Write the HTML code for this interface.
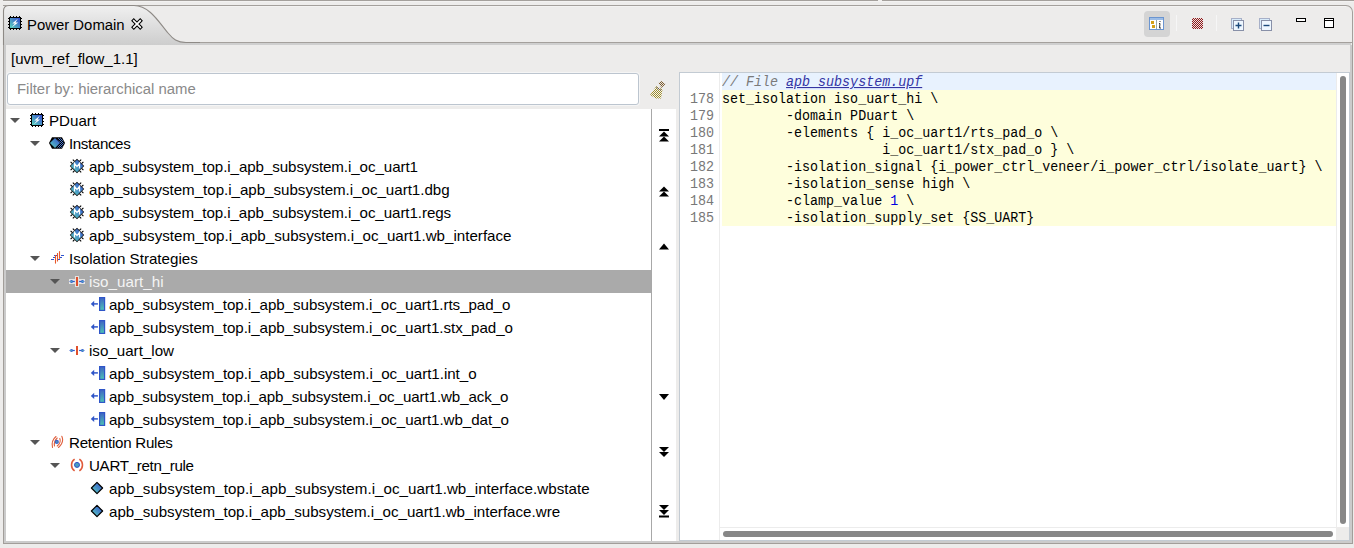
<!DOCTYPE html>
<html><head><meta charset="utf-8">
<style>
*{margin:0;padding:0;box-sizing:border-box}
html,body{width:1354px;height:548px;overflow:hidden;background:#edeceb;font-family:"Liberation Sans",sans-serif;color:#000}
.abs{position:absolute}
#topline{left:3px;top:0;width:1351px;height:1px;background:#a4a09c}
#tabbar{left:3px;top:5px;width:1350px;height:38px;border:1px solid #a4a09c;border-left:none;border-bottom:none;border-top-right-radius:7px}
#tabbar2{left:3px;top:42px;width:1350px;height:1px;background:#a4a09c}
#band{left:3px;top:43px;width:1348px;height:2px;background:#cfcfcf}
#frame{left:3px;top:43px;width:1350px;height:501px;border-left:1px solid #a29e9a;border-bottom:1px solid #a29e9a;border-right:1px solid #a29e9a}
#inner{left:4px;top:45px;width:1348px;height:498px;border:2px solid #cbcbcb;border-top:none;background:#edeceb}
.txt{white-space:pre;font-size:15px;line-height:23px}
#proj{left:11px;top:47px;font-size:15px;line-height:23px;white-space:pre}
#filter{left:7px;top:73px;width:632px;height:32px;background:#fff;border:1px solid #bcc5cf;border-radius:3px;box-shadow:0 0 0 1px #f5f5f5}
#filtertxt{left:17px;top:78px;font-size:14.9px;line-height:23px;color:#8a8a8a;white-space:pre}
#tree{left:6px;top:109px;width:645px;height:432px;background:#fff}
#sep1{left:651px;top:109px;width:1px;height:432px;background:#a8a8a8}
#nav{left:652px;top:109px;width:24px;height:432px;background:#fff}
#sel{left:6px;top:270px;width:645px;height:23px;background:#aaaaaa}
.row{position:absolute;height:23px;line-height:23px;font-size:15.15px;white-space:pre}
.tri{position:absolute;width:0;height:0;border-left:5px solid transparent;border-right:5px solid transparent;border-top:5px solid #555}
.ic{position:absolute}
#editor{left:679px;top:72px;width:671px;height:469px;border:1px solid #c3cbd3;background:#fff}
#ruler{left:680px;top:73px;width:39px;height:454px;background:#fff}
#rsep{left:719px;top:73px;width:1px;height:467px;background:#ececec}
#cmtband{left:722px;top:73px;width:614px;height:17px;background:#e8f2fe}
#yband{left:722px;top:90px;width:614px;height:136px;background:#fefedc}
.code{position:absolute;left:722px;font-family:"Liberation Mono",monospace;font-size:13.35px;line-height:17px;white-space:pre;color:#000;transform:scaleY(1.1);transform-origin:0 3px}
.ln{position:absolute;left:680px;width:34px;text-align:right;font-family:"Liberation Mono",monospace;font-size:13.35px;line-height:17px;white-space:pre;color:#787878;transform:scaleY(1.1);transform-origin:0 3px}
#vthumb{left:1340px;top:76px;width:6px;height:448px;background:#878787;border-radius:3px}
#hthumb{left:723px;top:531px;width:610px;height:6px;background:#878787;border-radius:3px}
#corner{left:1336px;top:527px;width:13px;height:13px;background:#edeceb}
#hsep{left:720px;top:527px;width:616px;height:1px;background:#ececec}
#vsep{left:1336px;top:73px;width:1px;height:454px;background:#ececec}
</style></head><body>
<svg width="0" height="0" style="position:absolute">
<defs>
  <linearGradient id="gblue" x1="0" y1="1" x2="1" y2="0">
    <stop offset="0.1" stop-color="#58c8c0"/><stop offset="0.9" stop-color="#3656cc"/></linearGradient>
  <linearGradient id="gbar" x1="0" y1="0" x2="0" y2="1">
    <stop offset="0" stop-color="#3f62c4"/><stop offset="1" stop-color="#4ec4b4"/></linearGradient>
  <pattern id="chk" width="2" height="2" patternUnits="userSpaceOnUse">
    <rect width="2" height="2" fill="#000"/><rect width="1" height="1" fill="#4a78d0"/><rect x="1" y="1" width="1" height="1" fill="#4a78d0"/></pattern>
  <symbol id="i-chip" viewBox="0 0 14 14">
    <rect x="1" y="1" width="12" height="12" fill="#000"/>
    <g fill="#000">
      <rect x="2" y="0" width="1" height="1"/><rect x="5" y="0" width="1" height="1"/><rect x="8" y="0" width="1" height="1"/><rect x="11" y="0" width="1" height="1"/>
      <rect x="2" y="13" width="1" height="1"/><rect x="5" y="13" width="1" height="1"/><rect x="8" y="13" width="1" height="1"/><rect x="11" y="13" width="1" height="1"/>
      <rect x="0" y="2" width="1" height="1"/><rect x="0" y="5" width="1" height="1"/><rect x="0" y="8" width="1" height="1"/><rect x="0" y="11" width="1" height="1"/>
      <rect x="13" y="2" width="1" height="1"/><rect x="13" y="5" width="1" height="1"/><rect x="13" y="8" width="1" height="1"/><rect x="13" y="11" width="1" height="1"/>
    </g>
    <rect x="2" y="2" width="10" height="10" fill="url(#gblue)"/>
    <path d="M10,2.6 L4.3,7.4 L7,7.4 L3.6,11.4 L10.2,6.4 L7.4,6.4 Z" fill="#fff"/>
  </symbol>
  <symbol id="i-inst" viewBox="0 0 16 12">
    <path d="M0,6 L3,0.3 L13,0.3 L16,6 L13,11.7 L3,11.7 Z" fill="#000"/>
    <path d="M8,1.3 L12.8,1.3 L15,6 L12.8,10.7 L8,10.7 L11.5,6 Z" fill="url(#chk)"/>
    <path d="M0.9,6 L6,0.9 L11.1,6 L6,11.1 Z" fill="url(#gblue)"/>
  </symbol>
  <symbol id="i-mod" viewBox="0 0 16 16">
    <g stroke="#000" stroke-width="1.1">
      <path d="M3.4,5.6 L1.6,3.8 M5.6,3.4 L3.8,1.6"/>
      <path d="M10.4,3.4 L12.2,1.6 M12.6,5.6 L14.4,3.8"/>
      <path d="M3.4,10.4 L1.6,12.2 M5.6,12.6 L3.8,14.4"/>
      <path d="M10.4,12.6 L12.2,14.4 M12.6,10.4 L14.4,12.2"/>
    </g>
    <path d="M8,0.8 L15.2,8 L8,15.2 L0.8,8 Z" fill="#000"/>
    <path d="M8,1.7 L14.3,8 L8,14.3 L1.7,8 Z" fill="url(#gblue)"/>
    <path d="M5.5,10.6 L5.5,5.4 L8,8.6 L10.5,5.4 L10.5,10.6" fill="none" stroke="#fff" stroke-width="1.25" stroke-linejoin="miter"/>
  </symbol>
  <symbol id="i-isos" viewBox="0 0 15 14">
    <g stroke="#2f55d0" stroke-width="1">
      <path d="M4,4.5 L7,4.5 M11,4.5 L14,4.5"/><path d="M3,6.5 L5,6.5 M9,6.5 L12,6.5"/><path d="M1,8.5 L4,8.5 M7,8.5 L10,8.5"/>
    </g>
    <g stroke="#e8582a" stroke-width="1.1">
      <path d="M5.5,4 L5.5,12.6"/><path d="M7.5,2 L7.5,10.5"/><path d="M9.5,0.2 L9.5,7.8"/>
    </g>
  </symbol>
  <symbol id="i-iso" viewBox="0 0 16 12">
    <path d="M2,6.5 L5.8,6.5" stroke="#2f55d0" stroke-width="1.2"/>
    <path d="M1,6.5 L2.5,5 L4,6.5 L2.5,8 Z" fill="#4aa8c0" stroke="#2f55d0" stroke-width="0.9"/>
    <path d="M10.1,6.5 L14,6.5" stroke="#2f55d0" stroke-width="1.2"/>
    <path d="M15,6.5 L13.5,5 L12,6.5 L13.5,8 Z" fill="#4aa8c0" stroke="#2f55d0" stroke-width="0.9"/>
    <rect x="7" y="2" width="2" height="9" fill="#e0502c"/>
  </symbol>
  <symbol id="i-port" viewBox="0 0 16 16">
    <path d="M2.5,7.9 L7.9,7.9" stroke="#2f55c8" stroke-width="1.5"/>
    <path d="M0.8,7.9 L4.2,4.8 L4.2,11 Z" fill="#2f55c8"/>
    <rect x="9.6" y="1.6" width="5" height="12.8" fill="url(#gbar)" stroke="#2f55c8" stroke-width="1.2"/>
  </symbol>
  <symbol id="i-rets" viewBox="0 0 14 14">
    <g fill="none" stroke="#e0603e" stroke-width="1.1" stroke-linecap="round">
      <path d="M6,1.5 Q1,5.5 2.5,12.5"/><path d="M7.2,3 Q3.5,6.5 4.5,11"/>
      <path d="M11.8,1.2 Q14.5,7 8.5,12.5"/><path d="M9.8,3.5 Q11.5,7.5 7.2,11"/>
    </g>
    <circle cx="6.8" cy="6.9" r="2.1" fill="#3f5fc8"/>
    <circle cx="6.8" cy="6.9" r="0.9" fill="#4aa0b8"/>
  </symbol>
  <symbol id="i-ret" viewBox="0 0 16 16">
    <g fill="none" stroke="#e05a3a" stroke-width="1.55">
      <path d="M5.6,2.2 A7,7 0 0,0 5.6,13.8"/><path d="M10.4,2.2 A7,7 0 0,1 10.4,13.8"/>
    </g>
    <circle cx="8" cy="7.9" r="2.5" fill="#4a9ec0" stroke="#3050c8" stroke-width="1"/>
  </symbol>
  <symbol id="i-dia" viewBox="0 0 14 14">
    <path d="M7,1.4 L12.6,7 L7,12.6 L1.4,7 Z" fill="url(#gblue)" stroke="#000" stroke-width="1.2" stroke-linejoin="round"/>
  </symbol>
</defs>
</svg>

<div class="abs" id="topline"></div><div class="abs" style="left:878px;top:0;width:4px;height:1px;background:#f0efee"></div><div class="abs" style="left:3px;top:1px;width:1351px;height:1px;background:#f3f2f1"></div><div class="abs" style="left:180px;top:6px;width:1166px;height:1px;background:#f3f2f1"></div>
<div class="abs" id="tabbar"></div>
<div class="abs" id="tabbar2"></div>
<div class="abs" id="frame"></div>
<div class="abs" id="inner"></div>
<div class="abs" id="band"></div>

<!-- active tab -->
<svg class="abs" style="left:0;top:0" width="200" height="46">
  <defs><linearGradient id="tg" x1="0" y1="0" x2="0" y2="1">
    <stop offset="0" stop-color="#f0f0f0"/><stop offset="1" stop-color="#cdcdcd"/></linearGradient></defs>
  <path d="M3.5,45 L3.5,11 Q3.5,5.5 9,5.5 L134,5.5 C150,5.5 160,24 168,33 C173,39 177,42.5 186,42.5 L200,42.5 L200,45 Z" fill="url(#tg)"/>
  <path d="M3.5,45 L3.5,11 Q3.5,5.5 9,5.5 L134,5.5 C150,5.5 160,24 168,33 C173,39 177,42.5 186,42.5 L200,42.5" fill="none" stroke="#8e8a86" stroke-width="1.1"/>
</svg>
<!-- tab icon -->
<svg class="abs" style="left:8px;top:16px" width="14" height="14"><use href="#i-chip"/></svg>
<div class="abs txt" style="left:27px;top:14px;font-size:14.9px">Power Domain</div>
<svg class="abs" style="left:131px;top:18px" width="12" height="12" viewBox="0 0 12 12">
  <path d="M2.8,2.8 L9.2,9.2 M9.2,2.8 L2.8,9.2" stroke="#000" stroke-width="3.8" stroke-linecap="square"/>
  <path d="M2.8,2.8 L9.2,9.2 M9.2,2.8 L2.8,9.2" stroke="#fff" stroke-width="1.7" stroke-linecap="square"/>
</svg>

<!-- toolbar -->
<div class="abs" style="left:1144px;top:11px;width:26px;height:26px;background:#d4d4d4;border-radius:4px"></div>
<svg class="abs" style="left:1149px;top:17px" width="15" height="13" viewBox="0 0 15 13">
  <rect x="0.5" y="0.5" width="14" height="12" fill="#fff" stroke="#6b95d0"/>
  <rect x="1" y="1" width="13" height="2" fill="#9dbde6"/>
  <rect x="7" y="3" width="1" height="9" fill="#9aa"/>
  <rect x="2" y="4" width="3" height="3" fill="#d4a017"/>
  <rect x="3" y="8" width="3" height="3" fill="#d4a017"/>
  <path d="M11,4 L11,5 M10,6.5 L11,6.5 L10.5,11 L12,11" stroke="#333" stroke-width="1" fill="none"/>
</svg>
<div class="abs" style="left:1176px;top:15px;width:1px;height:16px;background:#f6f6f6"></div>
<div class="abs" style="left:1192px;top:18px;width:11px;height:11px;background:repeating-conic-gradient(#8b1a1a 0 25%,#f0e0e0 0 50%) 0 0/2px 2px"></div>
<div class="abs" style="left:1216px;top:15px;width:1px;height:16px;background:#f6f6f6"></div>
<svg class="abs" style="left:1231px;top:18px" width="14" height="14" viewBox="0 0 14 14">
  <rect x="0.5" y="0.5" width="10" height="10" fill="#d8ecfb" stroke="#a7b0c8"/>
  <rect x="2.5" y="2.5" width="10" height="10" fill="#eef7ff" stroke="#8890a8"/>
  <path d="M7.5,4.5 L7.5,10.5 M4.5,7.5 L10.5,7.5" stroke="#1c4a7c" stroke-width="1.4"/>
</svg>
<svg class="abs" style="left:1259px;top:18px" width="14" height="14" viewBox="0 0 14 14">
  <rect x="0.5" y="0.5" width="10" height="10" fill="#d8ecfb" stroke="#a7b0c8"/>
  <rect x="2.5" y="2.5" width="10" height="10" fill="#eef7ff" stroke="#8890a8"/>
  <path d="M4.5,7.5 L10.5,7.5" stroke="#1c4a7c" stroke-width="1.4"/>
</svg>
<div class="abs" style="left:1296px;top:18px;width:10px;height:4px;border:1px solid #000;background:#fff"></div>
<div class="abs" style="left:1324px;top:18px;width:10px;height:10px;border:1px solid #000;background:#fff"><div style="position:absolute;left:0;top:1px;width:8px;height:1px;background:#000"></div></div>

<!-- project label & filter -->
<div class="abs" id="proj">[uvm_ref_flow_1.1]</div>
<div class="abs" id="filter"></div>
<div class="abs" id="filtertxt">Filter by: hierarchical name</div>
<svg class="abs" style="left:646px;top:78px" width="24" height="24" viewBox="0 0 24 24">
  <defs>
    <pattern id="pol" width="2" height="2" patternUnits="userSpaceOnUse"><rect width="2" height="2" fill="#f6f5f0"/><rect width="1" height="1" fill="#9c8c2c"/><rect x="1" y="1" width="1" height="1" fill="#9c8c2c"/></pattern>
    <pattern id="pbr" width="2" height="2" patternUnits="userSpaceOnUse"><rect width="2" height="2" fill="#e8e4dc"/><rect width="1" height="1" fill="#7a5a30"/><rect x="1" y="1" width="1" height="1" fill="#7a5a30"/></pattern>
  </defs>
  <path d="M12.5,5 L15.5,3 L19.5,6 L15.5,10 Z" fill="url(#pbr)"/>
  <path d="M10.5,8 L16.5,11.5 L15,20.5 L10,20.5 L4,17 Z" fill="url(#pol)"/>
  <path d="M10.5,9.5 L15.5,12.5" stroke="#504080" stroke-width="1" stroke-dasharray="1 1"/>
</svg>

<div class="abs" id="tree"></div>
<div class="abs" id="sel"></div>
<div class="abs" id="sep1"></div>
<div class="abs" id="nav"></div>

<!-- editor -->
<div class="abs" id="editor"></div>
<div class="abs" id="ruler"></div>
<div class="abs" id="rsep"></div>
<div class="abs" id="cmtband"></div>
<div class="abs" id="yband"></div>
<div class="abs" id="vsep"></div>
<div class="abs" id="hsep"></div>
<div class="abs" id="corner"></div>
<div class="abs" id="vthumb"></div>
<div class="abs" id="hthumb"></div>

<div class="tri" style="left:10px;top:118px"></div>
<svg class="ic" style="left:30px;top:113px" width="14" height="14"><use href="#i-chip"/></svg>
<div class="row" style="left:49px;top:109px">PDuart</div>
<div class="tri" style="left:30px;top:141px"></div>
<svg class="ic" style="left:49px;top:137px" width="16" height="12"><use href="#i-inst"/></svg>
<div class="row" style="left:69px;top:132px;letter-spacing:-0.387px">Instances</div>
<svg class="ic" style="left:69px;top:158px" width="16" height="16"><use href="#i-mod"/></svg>
<div class="row" style="left:89px;top:155px;letter-spacing:-0.081px">apb_subsystem_top.i_apb_subsystem.i_oc_uart1</div>
<svg class="ic" style="left:69px;top:181px" width="16" height="16"><use href="#i-mod"/></svg>
<div class="row" style="left:89px;top:178px;letter-spacing:-0.028px">apb_subsystem_top.i_apb_subsystem.i_oc_uart1.dbg</div>
<svg class="ic" style="left:69px;top:204px" width="16" height="16"><use href="#i-mod"/></svg>
<div class="row" style="left:89px;top:201px;letter-spacing:-0.083px">apb_subsystem_top.i_apb_subsystem.i_oc_uart1.regs</div>
<svg class="ic" style="left:69px;top:227px" width="16" height="16"><use href="#i-mod"/></svg>
<div class="row" style="left:89px;top:224px">apb_subsystem_top.i_apb_subsystem.i_oc_uart1.wb_interface</div>
<div class="tri" style="left:30px;top:256px"></div>
<svg class="ic" style="left:50px;top:251px" width="15" height="14"><use href="#i-isos"/></svg>
<div class="row" style="left:69px;top:247px">Isolation Strategies</div>
<div class="tri" style="left:50px;top:279px"></div>
<div class="abs" style="left:75px;top:276px;width:4px;height:11px;background:#e4e4e2"></div><div class="abs" style="left:69px;top:279px;width:16px;height:5px;background:#e4e4e2"></div>
<svg class="ic" style="left:69px;top:275px" width="16" height="12"><use href="#i-iso"/></svg>
<div class="row" style="left:89px;top:270px;color:#f4f4f4;letter-spacing:0.050px">iso_uart_hi</div>
<svg class="ic" style="left:90px;top:296px" width="16" height="16"><use href="#i-port"/></svg>
<div class="row" style="left:109px;top:293px;letter-spacing:-0.049px">apb_subsystem_top.i_apb_subsystem.i_oc_uart1.rts_pad_o</div>
<svg class="ic" style="left:90px;top:319px" width="16" height="16"><use href="#i-port"/></svg>
<div class="row" style="left:109px;top:316px;letter-spacing:-0.049px">apb_subsystem_top.i_apb_subsystem.i_oc_uart1.stx_pad_o</div>
<div class="tri" style="left:50px;top:348px"></div>
<svg class="ic" style="left:69px;top:344px" width="16" height="12"><use href="#i-iso"/></svg>
<div class="row" style="left:89px;top:339px">iso_uart_low</div>
<svg class="ic" style="left:90px;top:365px" width="16" height="16"><use href="#i-port"/></svg>
<div class="row" style="left:109px;top:362px;letter-spacing:-0.039px">apb_subsystem_top.i_apb_subsystem.i_oc_uart1.int_o</div>
<svg class="ic" style="left:90px;top:388px" width="16" height="16"><use href="#i-port"/></svg>
<div class="row" style="left:109px;top:385px;letter-spacing:-0.104px">apb_subsystem_top.i_apb_subsystem.i_oc_uart1.wb_ack_o</div>
<svg class="ic" style="left:90px;top:411px" width="16" height="16"><use href="#i-port"/></svg>
<div class="row" style="left:109px;top:408px;letter-spacing:-0.046px">apb_subsystem_top.i_apb_subsystem.i_oc_uart1.wb_dat_o</div>
<div class="tri" style="left:30px;top:440px"></div>
<svg class="ic" style="left:50px;top:435px" width="14" height="14"><use href="#i-rets"/></svg>
<div class="row" style="left:69px;top:431px;letter-spacing:-0.271px">Retention Rules</div>
<div class="tri" style="left:50px;top:463px"></div>
<svg class="ic" style="left:69px;top:457px" width="16" height="16"><use href="#i-ret"/></svg>
<div class="row" style="left:89px;top:454px;letter-spacing:-0.315px">UART_retn_rule</div>
<svg class="ic" style="left:90px;top:481px" width="14" height="14"><use href="#i-dia"/></svg>
<div class="row" style="left:109px;top:477px;letter-spacing:0.027px">apb_subsystem_top.i_apb_subsystem.i_oc_uart1.wb_interface.wbstate</div>
<svg class="ic" style="left:90px;top:504px" width="14" height="14"><use href="#i-dia"/></svg>
<div class="row" style="left:109px;top:500px">apb_subsystem_top.i_apb_subsystem.i_oc_uart1.wb_interface.wre</div>

<!-- nav arrows -->
<svg class="abs" style="left:652px;top:109px" width="24" height="432">
  <g fill="#000" transform="translate(-652,-109)">
    <rect x="659" y="129" width="10" height="2"/>
    <path d="M659,136.5 L664,131.5 L669,136.5 Z"/><path d="M659,141.5 L664,136.5 L669,141.5 Z"/>
    <path d="M659,191.5 L664,186.5 L669,191.5 Z"/><path d="M659,196.5 L664,191.5 L669,196.5 Z"/>
    <path d="M659,249.5 L664,243.5 L669,249.5 Z"/>
    <path d="M659,394 L664,400 L669,394 Z"/>
    <path d="M659,447 L664,452 L669,447 Z"/><path d="M659,452 L664,457 L669,452 Z"/>
    <path d="M659,505 L664,510 L669,505 Z"/><path d="M659,510 L664,515 L669,510 Z"/>
    <rect x="659" y="515.5" width="10" height="2"/>
  </g>
</svg>
<!-- code -->
<div class="code" style="top:73px"><i style="color:#7a7a7a">// File </i><i style="color:#3434a4;text-decoration:underline">apb_subsystem.upf</i></div>
<div class="ln" style="top:90px">178</div><div class="code" style="top:90px">set_isolation iso_uart_hi \</div>
<div class="ln" style="top:107px">179</div><div class="code" style="top:107px">        -domain PDuart \</div>
<div class="ln" style="top:124px">180</div><div class="code" style="top:124px">        -elements { i_oc_uart1/rts_pad_o \</div>
<div class="ln" style="top:141px">181</div><div class="code" style="top:141px">                    i_oc_uart1/stx_pad_o } \</div>
<div class="ln" style="top:158px">182</div><div class="code" style="top:158px">        -isolation_signal {i_power_ctrl_veneer/i_power_ctrl/isolate_uart} \</div>
<div class="ln" style="top:175px">183</div><div class="code" style="top:175px">        -isolation_sense high \</div>
<div class="ln" style="top:192px">184</div><div class="code" style="top:192px">        -clamp_value <span style="color:#0000e0">1</span> \</div>
<div class="ln" style="top:209px">185</div><div class="code" style="top:209px">        -isolation_supply_set {SS_UART}</div>

</body></html>
